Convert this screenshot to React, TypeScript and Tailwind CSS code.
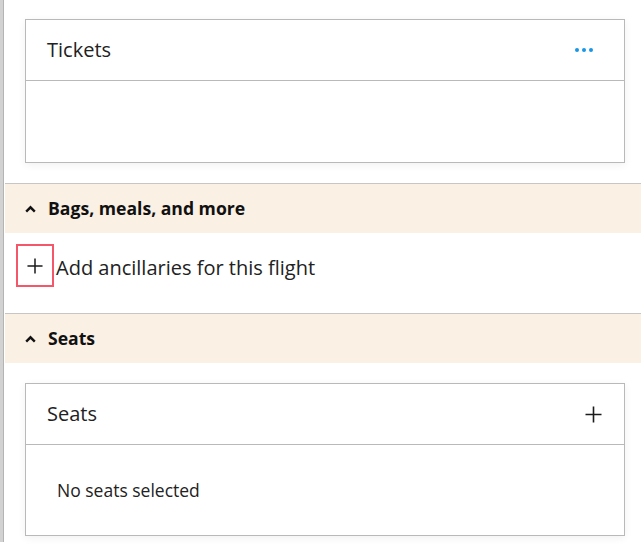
type CardProps = {
  title: string
  action: React.ReactNode
  bodyHeight: string
  children?: React.ReactNode
}

function Card({ title, action, bodyHeight, children }: CardProps) {
  return (
    <div className="ml-[20px] w-[600px] border border-[#b9b9b9] bg-white shadow-[0_2px_8px_rgba(0,0,0,0.06)]">
      <div className="h-[61px] flex items-center justify-between pl-[21px] pr-[22px] border-b border-[#b9b9b9]">
        <span className="text-[20px] text-[#222]">{title}</span>
        {action}
      </div>
      <div className={bodyHeight}>{children}</div>
    </div>
  )
}

function SectionHeader({ label }: { label: string }) {
  return (
    <div className="h-[50px] border-t border-[#c6c6c6] bg-[#fbf0e4] flex items-center pl-[20px] gap-[12px]">
      <svg width="11" height="8" viewBox="0 0 11 8" fill="none">
        <path d="M1.2 6.6L5.5 2.3l4.3 4.3" stroke="#111" strokeWidth="2.4" />
      </svg>
      <span className="text-[17.6px] font-bold text-[#111]">{label}</span>
    </div>
  )
}

function PlusIcon({ size = 17 }: { size?: number }) {
  return (
    <svg width={size} height={size} viewBox="0 0 17 17" fill="none">
      <path d="M8.5 0.5v16M0.5 8.5h16" stroke="#1b1b1b" strokeWidth="1.6" />
    </svg>
  )
}

export default function App() {
  return (
    <div
      className="w-[641px] h-[548px] flex bg-white overflow-hidden"
      style={{ fontFamily: '"Open Sans", "Noto Sans", sans-serif' }}
    >
      <div className="w-[4px] h-[542px] bg-[#d2d2d2] border-r border-[#b4b4b4] shrink-0" />
      <div className="flex-1 pl-[1px]">
        <div className="pt-[19px] pb-[20px]">
          <Card
            title="Tickets"
            bodyHeight="h-[81px]"
            action={
              <div className="flex gap-[3px] mr-[9px]">
                <span className="w-[4px] h-[4px] rounded-full bg-[#1a96e4]" />
                <span className="w-[4px] h-[4px] rounded-full bg-[#1a96e4]" />
                <span className="w-[4px] h-[4px] rounded-full bg-[#1a96e4]" />
              </div>
            }
          />
        </div>

        <SectionHeader label="Bags, meals, and more" />
        <div className="h-[80px] pt-[11px] pl-[11px] flex items-start">
          <button className="w-[38px] h-[43px] border-2 border-[#f4566a] flex items-center justify-center">
            <PlusIcon size={16} />
          </button>
          <span className="ml-[2px] mt-[9px] text-[20px] text-[#222]">Add ancillaries for this flight</span>
        </div>

        <SectionHeader label="Seats" />
        <div className="pt-[20px]">
          <Card
            title="Seats"
            bodyHeight="h-[90px] pl-[31px] pt-[32px]"
            action={<PlusIcon />}
          >
            <span className="text-[17.5px] text-[#222]">No seats selected</span>
          </Card>
        </div>
      </div>
    </div>
  )
}
